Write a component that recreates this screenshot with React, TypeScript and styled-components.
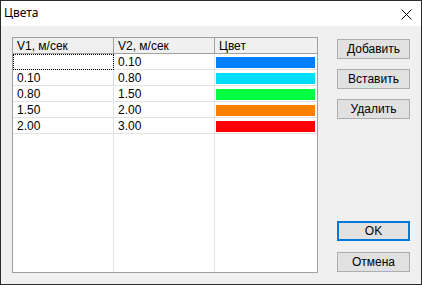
import React from 'react';
import styled, { createGlobalStyle } from 'styled-components';

const GlobalStyle = createGlobalStyle`
  html, body {
    margin: 0;
    padding: 0;
    background: #f0f0f0;
  }
  * {
    box-sizing: border-box;
  }
`;

type Row = { v1: string; v2: string; color: string };

const rows: Row[] = [
  { v1: '', v2: '0.10', color: '#0080ff' },
  { v1: '0.10', v2: '0.80', color: '#00ddff' },
  { v1: '0.80', v2: '1.50', color: '#00ff40' },
  { v1: '1.50', v2: '2.00', color: '#ff8000' },
  { v1: '2.00', v2: '3.00', color: '#ff0000' },
];

const CloseIcon = () => (
  <svg width="11" height="11" viewBox="0 0 11 11">
    <path d="M0.5 0.5 L10.5 10.5 M10.5 0.5 L0.5 10.5" stroke="#000" strokeWidth="1" fill="none" />
  </svg>
);

const App = () => {
  return (
    <>
      <GlobalStyle />
      <Window>
        <TitleBar>
          <Title>Цвета</Title>
          <CloseButton>
            <CloseIcon />
          </CloseButton>
        </TitleBar>
        <Body>
          <Grid>
            <HeaderCell>V1, м/сек</HeaderCell>
            <HeaderCell>V2, м/сек</HeaderCell>
            <HeaderCell $last>Цвет</HeaderCell>
            {rows.map((r, i) => (
              <React.Fragment key={i}>
                <Cell $focused={i === 0}>{r.v1}</Cell>
                <Cell>{r.v2}</Cell>
                <Cell $last>
                  <ColorBar style={{ background: r.color }} />
                </Cell>
              </React.Fragment>
            ))}
            <Filler />
            <Filler />
            <Filler $last />
          </Grid>
          <ButtonColumn>
            <ButtonGroup>
              <Button>Добавить</Button>
              <Button>Вставить</Button>
              <Button>Удалить</Button>
            </ButtonGroup>
            <ButtonGroup $gap={11}>
              <Button $primary>OK</Button>
              <Button>Отмена</Button>
            </ButtonGroup>
          </ButtonColumn>
        </Body>
      </Window>
    </>
  );
};

export default App;

const Window = styled.div`
  width: 422px;
  height: 285px;
  border: 1px solid #2b2b2b;
  background: #f0f0f0;
  display: flex;
  flex-direction: column;
  font-family: 'Liberation Sans', Arial, sans-serif;
  font-size: 12px;
  color: #000;
`;

const TitleBar = styled.div`
  height: 25px;
  flex: none;
  background: #fff;
  display: flex;
  align-items: center;
  justify-content: space-between;
  padding: 0 9px 0 3px;
`;

const Title = styled.span`
  font-family: 'Noto Sans', 'Segoe UI', sans-serif;
  font-size: 12px;
  line-height: 1;
  margin-top: -1px;
`;

const CloseButton = styled.div`
  display: flex;
  width: 11px;
  height: 11px;
  margin-top: 2px;
`;

const Body = styled.div`
  flex: 1;
  display: flex;
  padding: 11px;
  gap: 19px;
`;

const Grid = styled.div`
  width: 306px;
  height: 236px;
  border: 1px solid #a0a0a0;
  background: #fff;
  display: grid;
  grid-template-columns: 101px 101px 1fr;
  grid-template-rows: 16px repeat(5, 16px) 1fr;
`;

const HeaderCell = styled.div<{ $last?: boolean }>`
  background: #f0f0f0;
  border-bottom: 1px solid #a0a0a0;
  border-right: ${(p) => (p.$last ? 'none' : '1px solid #a0a0a0')};
  padding: 0 4px;
  display: flex;
  align-items: center;
  white-space: nowrap;
`;

const Cell = styled.div<{ $last?: boolean; $focused?: boolean }>`
  border-bottom: 1px solid #e3e3e3;
  border-right: ${(p) => (p.$last ? 'none' : '1px solid #e3e3e3')};
  padding: ${(p) => (p.$last ? '2px 2px 1px 1px' : '0 4px')};
  display: flex;
  align-items: center;
  outline: ${(p) => (p.$focused ? '1px dotted #000' : 'none')};
  outline-offset: -1px;
`;

const Filler = styled.div<{ $last?: boolean }>`
  border-right: ${(p) => (p.$last ? 'none' : '1px solid #e3e3e3')};
`;

const ColorBar = styled.div`
  width: 100%;
  height: 11px;
`;

const ButtonColumn = styled.div`
  width: 73px;
  display: flex;
  flex-direction: column;
  justify-content: space-between;
  padding: 2px 0 1px;
`;

const ButtonGroup = styled.div<{ $gap?: number }>`
  display: flex;
  flex-direction: column;
  gap: ${(p) => p.$gap ?? 10}px;
`;

const Button = styled.div<{ $primary?: boolean }>`
  height: 20px;
  background: #e1e1e1;
  border: ${(p) => (p.$primary ? '2px solid #0078d7' : '1px solid #adadad')};
  display: flex;
  align-items: center;
  justify-content: center;
  font-size: 12px;
`;
